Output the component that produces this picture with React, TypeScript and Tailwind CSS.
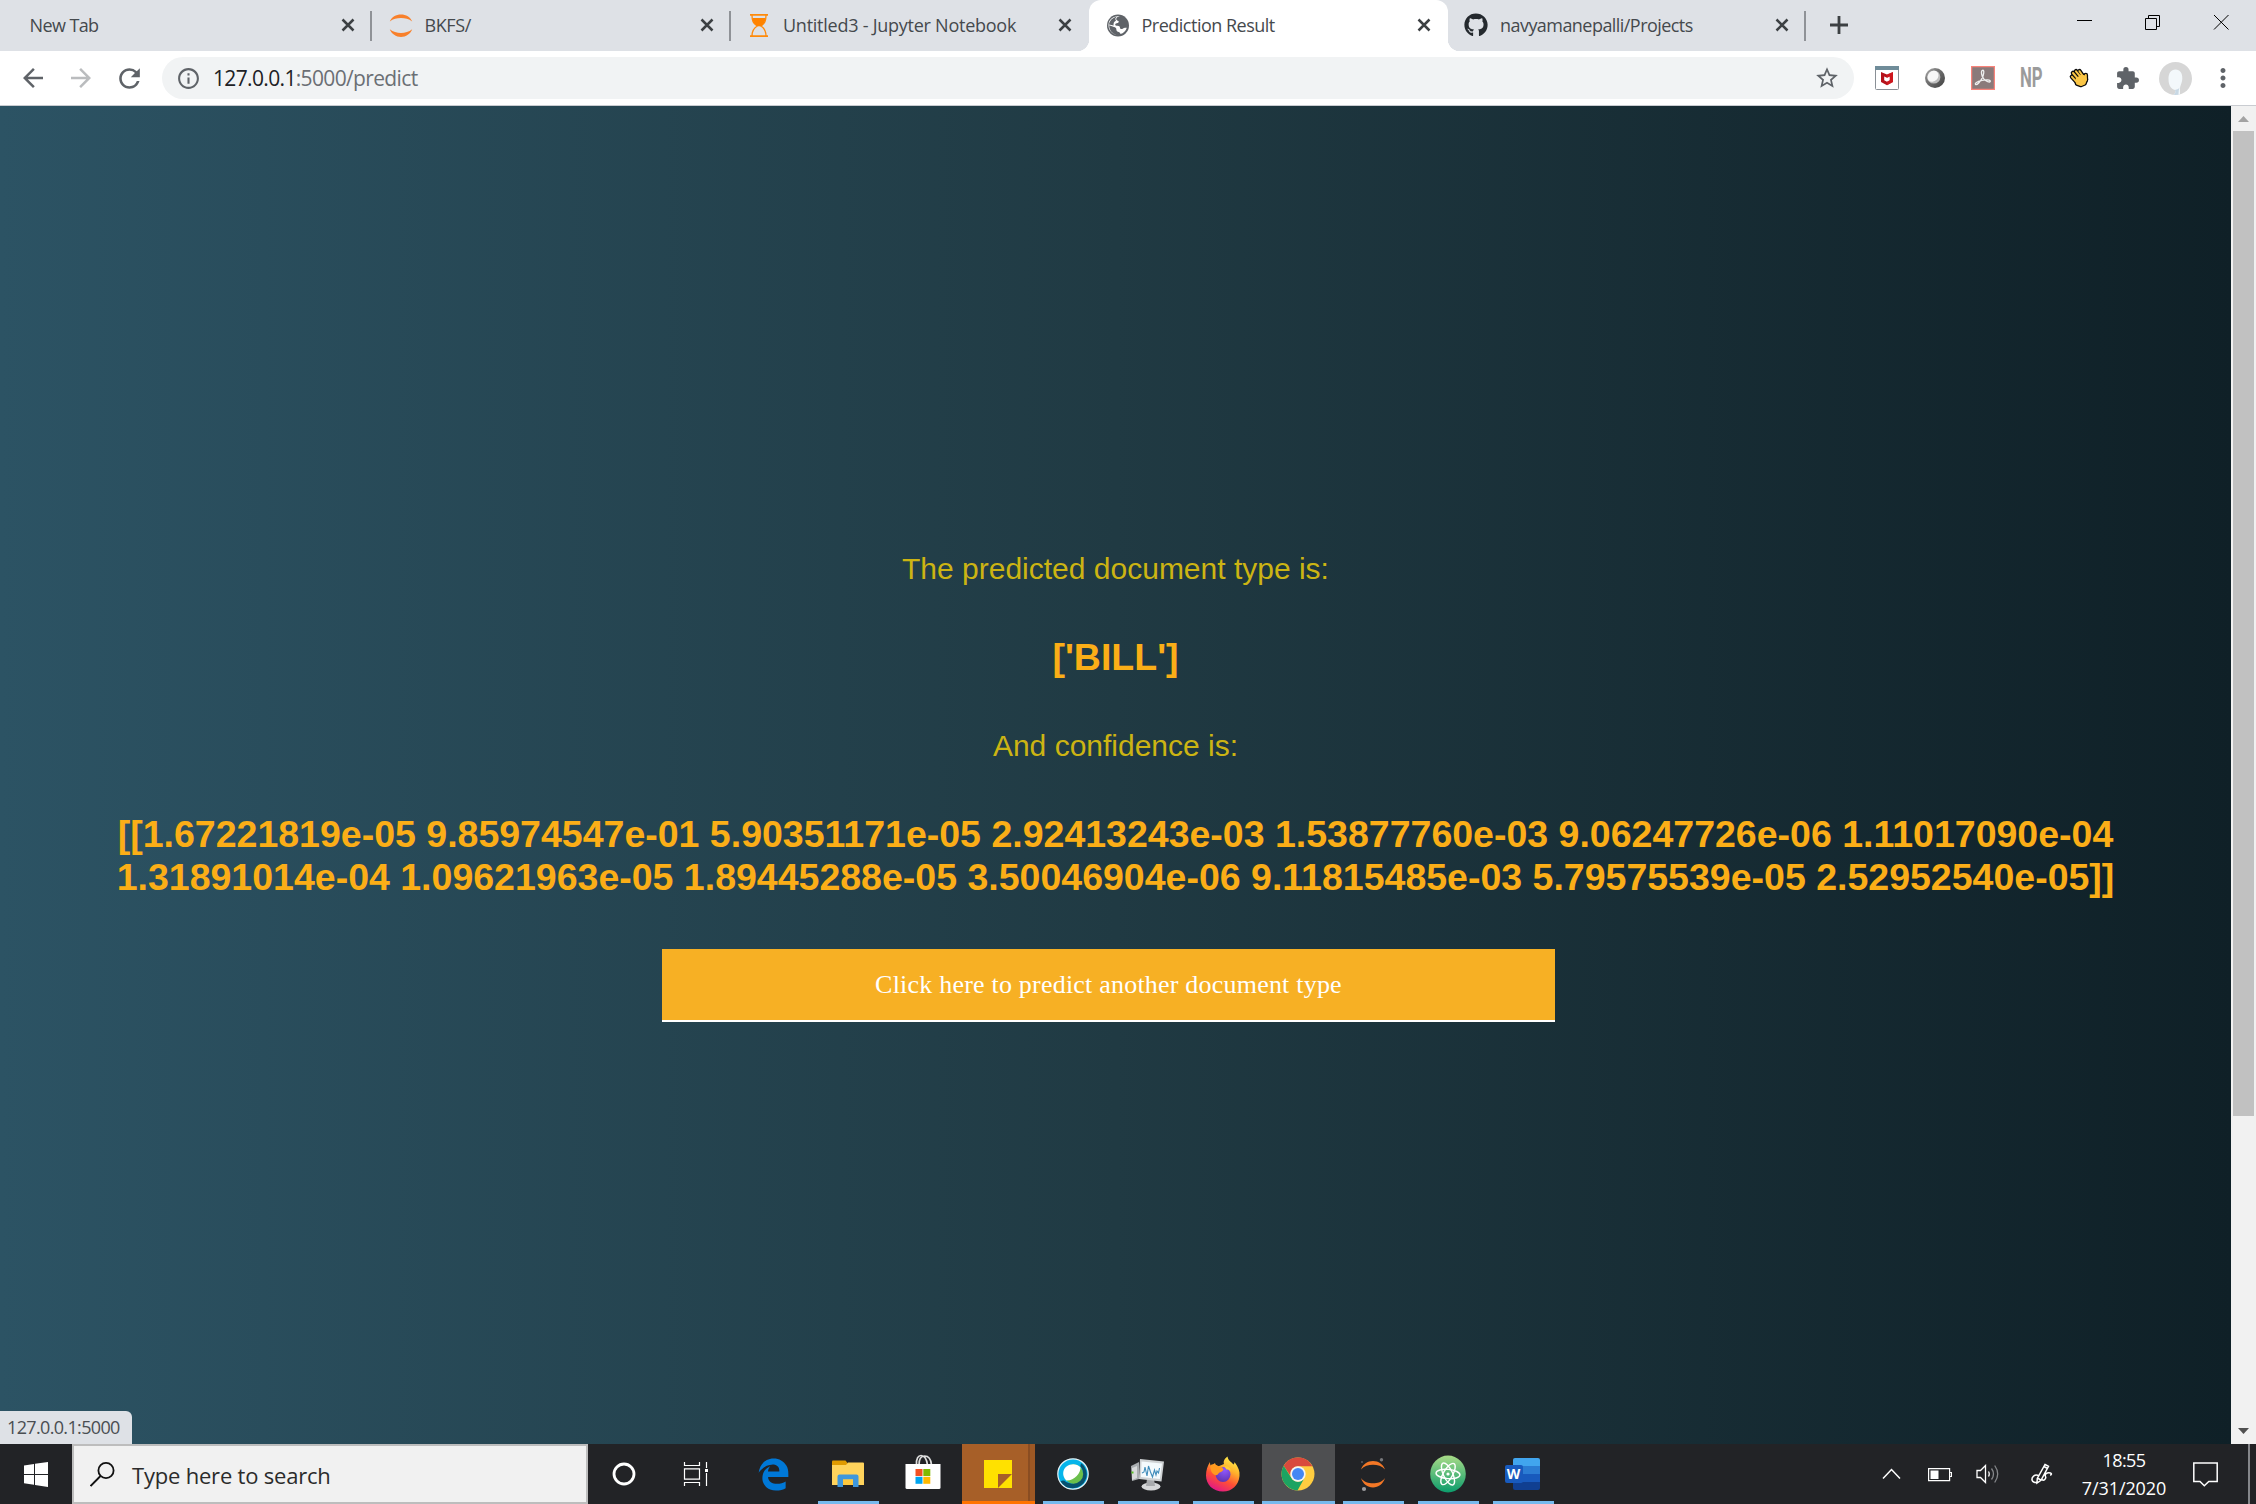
import React from "react";
import { FaGithub, FaEdgeLegacy } from "react-icons/fa";
import { MdArrowBack, MdArrowForward, MdRefresh, MdInfoOutline, MdStarBorder, MdExtension, MdMoreVert } from "react-icons/md";

type Kids = { children?: React.ReactNode };

const ui = "font-['Open_Sans','Noto_Sans',sans-serif]";

/* ---------- tab strip ---------- */

const JupyterFavicon = () => (
  <svg width="24" height="24" viewBox="0 0 24 24" fill="#f8802b">
    <path d="M.8 8.4C2.6 4 7 1.400 12 1.400S21.400 4 23.200 8.400C20 5.800 16 4.900 12 4.900S4 5.800.8 8.400z" />
    <path d="M.8 16.300C2.600 21 7 24 12 24s9.400-3 11.200-7.700C20 19 16 19.900 12 19.900S4 19 .8 16.300z" />
  </svg>
);

const HourglassFavicon = () => (
  <svg width="24" height="24" viewBox="0 0 24 24">
    <g fill="none" stroke="#ff8a0a" strokeWidth="1.3">
      <path d="M3 1.800h18M3 23.200h18" strokeWidth="1.800" />
      <path d="M5 2c0 6 1 8.500 5.200 11C6 15.500 5 18 5 23M19 2c0 6-1 8.500-5.200 11C18 15.500 19 18 19 23" />
    </g>
    <path d="M5.500 5h13c-.3 4.600-2 6.500-5 8.300h-3C7.500 11.500 5.800 9.600 5.500 5z" fill="#ff8300" />
  </svg>
);

const GlobeFavicon = () => (
  <svg width="24" height="24" viewBox="0 0 24 24">
    <circle cx="12" cy="12.500" r="11" fill="#5f6368" />
    <path d="M14 3.600c-2.500 0-3.800 1.200-3.800 2.700 0 1 1.300 1.200 2.200 1.800.8.600.2 1.700-.8 2-1.300.4-2.400.6-2.400 1.700 0 .9 1 1 2.300 1 1.700 0 2.500.8 2.500 2 0 1 .8 1.300 2 1.200 1.200-.1 1.600-1.100 2.800-1.200l2-.1c-.9 3.200-3.400 5.500-6.300 6.300-.3-1.500-1.300-2-2.600-2.300-1.500-.3-1.500-1.600-1.600-2.600-.1-1.300-1-1.800-2.300-2.200l-4.800-1.600c-.1 4.800 3 8.500 7.300 9.600-1.500-.2-8.400-3.300-8-10C2.800 6 8 2.200 14 3.600z" fill="#fff" />
    <path d="M3 11.500C3.500 7.500 7 4.500 10.800 3.800 9 5 9 6.500 10 7.500c-.7.800-1.700 1.300-2.200 2.200-.4.900-.3 1.900-.2 2.900z" fill="#5f6368" />
  </svg>
);

const TabClose = () => (
  <svg width="14" height="14" viewBox="0 0 14 14" className="shrink-0">
    <path d="M1.500 1.500l11 11M12.500 1.500l-11 11" stroke="#3c4043" strokeWidth="2.500" />
  </svg>
);

function Tab({ icon, title, track, active, sep }: { icon?: React.ReactNode; title: string; track: string; active?: boolean; sep?: boolean }) {
  return (
    <div className={`relative flex h-[51px] w-[358.5px] shrink-0 items-center pr-[17px] pb-px ${icon ? "pl-[17.5px]" : "pl-4"} ${active ? "rounded-t-[12px] bg-white" : ""}`}>
      {active && (
        <>
          <span className="absolute bottom-0 -left-3 size-3 bg-[radial-gradient(circle_at_0_0,transparent_12px,#fff_12.5px)]" />
          <span className="absolute -right-3 bottom-0 size-3 bg-[radial-gradient(circle_at_100%_0,transparent_12px,#fff_12.5px)]" />
        </>
      )}
      {icon && <span className="mr-3 -ml-px flex size-6 items-center justify-center">{icon}</span>}
      <span className={`grow pb-px text-[18px] leading-6 whitespace-nowrap text-[#45494d] ${track}`}>{title}</span>
      <TabClose />
      {sep && <span className="absolute top-[11px] right-0 h-[30px] w-[2px] bg-[#8f9297]" />}
    </div>
  );
}

const TabStrip = () => (
  <div className="flex h-[51px] bg-[#dee1e6] pl-[13.5px]">
    <Tab title="New Tab" track="tracking-[-0.6px]" sep />
    <Tab icon={<JupyterFavicon />} title="BKFS/" track="tracking-[-0.4px]" sep />
    <Tab icon={<HourglassFavicon />} title="Untitled3 - Jupyter Notebook" track="tracking-[-0.25px]" />
    <Tab icon={<GlobeFavicon />} title="Prediction Result" track="tracking-[-0.5px]" active />
    <Tab icon={<FaGithub size={24} color="#24292e" />} title="navyamanepalli/Projects" track="tracking-[-0.55px]" sep />
    <div className="flex w-[66px] items-center justify-center pb-px">
      <svg width="18" height="18" viewBox="0 0 18 18">
        <path d="M9 0v18M0 9h18" stroke="#3c4043" strokeWidth="2.800" />
      </svg>
    </div>
    <div className="ml-auto flex h-[43px] items-center pr-[27px]">
      <svg width="152" height="16" viewBox="0 0 152 16" fill="none" stroke="#000">
        <path d="M0 6.500h15" />
        <path d="M68.500 4.500h11v11h-11zM71.500 4.500v-3h11v11h-3" />
        <path d="M137 1l14.500 14.500M151.500 1L137 15.500" />
      </svg>
    </div>
  </div>
);

/* ---------- toolbar ---------- */

const Slot = ({ children }: Kids) => <div className="flex h-full w-12 shrink-0 items-center justify-center">{children}</div>;

const McAfeeIcon = () => (
  <svg width="24" height="24" viewBox="0 0 24 24">
    <rect x=".5" y=".5" width="23" height="23" rx="1" fill="#fff" stroke="#8a9096" />
    <path d="M0 0h24v4H0z" fill="#6f8c99" />
    <path d="M6 6l6 2.600L18 6v10l-6 3.200L6 16z" fill="#b5121b" />
    <path d="M9.200 10.500l2.800 1.200 2.800-1.200v3.800L12 15.700l-2.800-1.400z" fill="#fff" />
    <path d="M12 8.600L18 6v10l-6 3.200v-3.500l2.800-1.400v-3.800L12 11.700z" fill="#e01a22" opacity=".6" />
  </svg>
);

const OrbIcon = () => (
  <svg width="22" height="22" viewBox="0 0 22 22">
    <defs>
      <linearGradient id="orb" x1="0" y1="0" x2="1" y2="1">
        <stop offset="0" stopColor="#b5b5b5" />
        <stop offset=".35" stopColor="#777" />
        <stop offset="1" stopColor="#3f3f3f" />
      </linearGradient>
    </defs>
    <circle cx="11" cy="11" r="10" fill="url(#orb)" />
    <circle cx="9.800" cy="10" r="6.600" fill="#bdbdbd" />
    <ellipse cx="9" cy="9.200" rx="6" ry="5" transform="rotate(-45 9 9.200)" fill="#f7f7f7" />
  </svg>
);

const AcrobatIcon = () => (
  <svg width="24" height="24" viewBox="0 0 24 24">
    <rect x=".6" y=".6" width="22.800" height="22.800" fill="#8a7a7a" stroke="#f9837a" strokeWidth="1.300" />
    <path d="M11.500 4.300c2.200-.6 1.300 4.700-.5 8C9.300 15.600 6 19.500 4.600 18.500c-1.300-1.200 2.400-3.500 6.400-4.200 4.300-.8 8.500-.6 8.300 1-.3 1.700-4.300.2-6.700-2.600-2-2.500-3-7.800-1.100-8.400z" fill="none" stroke="#eee" strokeWidth="1.300" />
  </svg>
);

const WaveIcon = () => (
  <svg width="22" height="22" viewBox="0 0 22 22" strokeLinecap="round" strokeLinejoin="round" fill="none">
    <g stroke="#0c0c0c" strokeWidth="4.600">
      <path d="M5 6l6 7M8 4.300l5 6M11.500 4.200l4 6M4 9.800l5 5.500M17.800 8v5" />
      <path d="M8.500 12l5-3.500 3.500 1 1 3-1.500 4-3.500 1.500-4-1.500z" fill="#0c0c0c" />
    </g>
    <path d="M8.500 12l5-3.500 3.500 1 1 3-1.500 4-3.500 1.500-4-1.500z" fill="#fbc646" stroke="#fbc646" strokeWidth="2" />
    <path d="M5 6l6 7M8 4.300l5 6M11.500 4.200l4 6M4 9.800l5 5.500M17.800 8v5" stroke="#fbc646" strokeWidth="2" />
  </svg>
);

const AvatarIcon = () => (
  <svg width="33" height="33" viewBox="0 0 33 33">
    <defs>
      <clipPath id="face"><circle cx="16.500" cy="16.500" r="16.500" /></clipPath>
    </defs>
    <g clipPath="url(#face)">
      <path d="M0 0h33v33H0z" fill="#d6d6d6" />
      <path d="M9.500 17c0-6 2.500-9.500 7-9.500s7 3.500 6.800 9c-.2 5-2.300 7-2.300 10.500V33h-6.500c2-1.500 2-3.500 1.500-5-4-.8-6.500-5-6.500-11z" fill="#f3f8fb" />
      <path d="M21 24c-.5 3-3 3.500-5 4 .8 2 .2 4-1.500 5h5c0-3 .3-6 1.500-9z" fill="#c8d8e4" />
    </g>
  </svg>
);

const Toolbar = () => (
  <div className="flex h-[55px] items-center border-b border-[#c9ccd1] bg-white pl-[9px]">
    <Slot><MdArrowBack size={30} color="#5f6368" /></Slot>
    <Slot><MdArrowForward size={30} color="#babcbe" /></Slot>
    <Slot><MdRefresh size={31} color="#5f6368" /></Slot>
    <div className="ml-[9px] flex h-[42px] w-[1692px] items-center rounded-full bg-[#f1f3f4] pr-[14px] pl-[14px]">
      <MdInfoOutline size={25} color="#5f6368" />
      <span className="ml-3 grow text-[21px] leading-7 tracking-[-0.65px] text-[#202124]">
        127.0.0.1<span className="text-[#6b6f74]">:5000/predict</span>
      </span>
      <MdStarBorder size={26} color="#5f6368" />
    </div>
    <div className="ml-[9px] flex h-full items-center">
      <Slot><McAfeeIcon /></Slot>
      <Slot><OrbIcon /></Slot>
      <Slot><AcrobatIcon /></Slot>
      <Slot><span className="inline-block scale-x-[0.62] font-['Roboto',sans-serif] text-[27px] leading-7 font-bold text-[#9b9b9b]">NP</span></Slot>
      <Slot><WaveIcon /></Slot>
      <Slot><MdExtension size={25} color="#5f6368" /></Slot>
      <Slot><AvatarIcon /></Slot>
      <Slot><MdMoreVert size={30} color="#5f6368" /></Slot>
    </div>
  </div>
);

/* ---------- page ---------- */

const Page = () => (
  <div className="flex h-[1338px]">
    <div className="relative w-[2231px] bg-linear-to-l from-[#0f2027] via-[#203a43] to-[#2c5364] pt-[446px] text-center font-['Liberation_Sans',Arial,sans-serif]">
      <div className="flex flex-col items-center gap-[50px]">
        <p className="h-[34px] text-[30px] leading-[34px] text-[#ccb413]">The predicted document type is:</p>
        <h1 className="h-[43px] text-[37.5px] leading-[43px] font-bold text-[#fbae17]">['BILL']</h1>
        <p className="h-[34px] text-[30px] leading-[34px] text-[#ccb413]">And confidence is:</p>
        <h1 className="h-[86px] text-[37.5px] leading-[43px] font-bold whitespace-nowrap text-[#fbae17]">
          [[1.67221819e-05 9.85974547e-01 5.90351171e-05 2.92413243e-03 1.53877760e-03 9.06247726e-06 1.11017090e-04
          <br />
          1.31891014e-04 1.09621963e-05 1.89445288e-05 3.50046904e-06 9.11815485e-03 5.79575539e-05 2.52952540e-05]]
        </h1>
        <button className="mr-[14px] h-[73px] w-[893px] border-b-2 border-white bg-[#f7b024] font-['Liberation_Serif',serif] text-[26px] leading-[30px] tracking-[0.21px] text-white">
          Click here to predict another document type
        </button>
      </div>
      <div className={`absolute bottom-0 left-0 flex h-[33px] w-[132px] items-center rounded-tr-[6px] bg-[#dee1e6] pl-[7px] text-[18px] tracking-[-0.65px] text-[#4a4e52] ${ui}`}>
        127.0.0.1:5000
      </div>
    </div>
    <div className="flex w-[25px] flex-col items-center bg-[#f1f1f1]">
      <svg width="25" height="25" viewBox="0 0 25 25"><path d="M7 16l5.500-6 5.500 6z" fill="#a3a3a3" /></svg>
      <div className="h-[985px] w-[21px] bg-[#c1c1c1]" />
      <svg width="25" height="25" viewBox="0 0 25 25" className="mt-auto"><path d="M7 9l5.500 6L18 9z" fill="#505050" /></svg>
    </div>
  </div>
);

/* ---------- taskbar ---------- */

const TaskItem = ({ children, running, wide, className = "" }: Kids & { running?: boolean; wide?: boolean; className?: string }) => (
  <div className="flex h-full w-[75px] shrink-0 justify-center">
    <div className={`relative flex h-full items-center justify-center ${wide ? "w-[73px]" : "w-[61px]"} ${className}`}>
      {children}
      {running && <span className="absolute inset-x-0 bottom-0 h-[3px] bg-[#76b9ed]" />}
    </div>
  </div>
);

const Explorer = () => (
  <svg width="32" height="28" viewBox="0 0 32 28">
    <path d="M0 1.500Q0 .5 1 .5h12.500L15.500 3v3H0z" fill="#e09a00" />
    <path d="M0 5h14l2-2.500h15q1 0 1 1V25H0z" fill="#ffd35c" />
    <path d="M5.500 27V16.500q0-2 2-2H24.500q2 0 2 2V27H21v-7.500H11V27z" fill="#3f97dc" />
    <path d="M11 19.500h10V25H11z" fill="#ffc83d" />
  </svg>
);

const Store = () => (
  <svg width="36" height="36" viewBox="0 0 36 36">
    <path d="M11.500 11C11 4 13.500 1.500 16 1.500S21.500 4 22.500 11M14 11c0-6 2-9 5.500-9S26 5 26.500 11" fill="none" stroke="#ddd" strokeWidth="1.700" />
    <path d="M.5 10h35v23.500q0 1.500-1.500 1.500H2Q.5 35 .5 33.500z" fill="#fff" />
    <path d="M10.500 15h7v7h-7z" fill="#f25022" /><path d="M18.300 15h7v7h-7z" fill="#7fba00" />
    <path d="M10.500 22.800h7v7h-7z" fill="#00a4ef" /><path d="M18.300 22.800h7v7h-7z" fill="#ffb900" />
  </svg>
);

const Webex = () => (
  <svg width="32" height="32" viewBox="0 0 32 32">
    <circle cx="16" cy="16" r="15.200" fill="#06b4ea" stroke="#e8f4f8" strokeWidth="1.200" />
    <path d="M24.500 5.300A14 14 0 0 1 16 30.200 14 14 0 0 1 3.500 23.200Q7 21.500 9 24q7 3.500 13-1.500 5-5 3-12-3-2.500-.5-5.200z" fill="#07506e" />
    <circle cx="16.500" cy="16" r="9.700" fill="#6bbf4b" />
    <path d="M23.500 9.200C23.800 15 17.500 22.800 9.300 22.500 4.800 18 5.500 11.500 9.500 8.500 13.800 5 20 5.500 23.500 9.200z" fill="#fff" />
  </svg>
);

const Monitor = () => (
  <svg width="36" height="34" viewBox="0 0 36 34">
    <path d="M1 9l8-4v17l-7 2z" fill="#a9adb0" /><path d="M2 11l5-2v12l-5 2z" fill="#d8dadb" />
    <path d="M1.500 14.500h2v2h-2z" fill="#58c322" />
    <ellipse cx="21" cy="29.500" rx="9.500" ry="4" fill="#d5d6d8" /><path d="M17 22h7l1 7h-9z" fill="#a8aaad" />
    <path d="M10 2l24 2.500-2.500 20L9 22z" fill="#cfd2d4" />
    <path d="M11.500 4.500l20.500 2-2.200 15.500L11 20z" fill="#f4fafd" />
    <path d="M12 16l2-1 1-5 2 9 1.500-10 2 6 2 5 2-7 1.500 5 1-4 1.500 2 1-5" fill="none" stroke="#3f8cbb" strokeWidth="1.100" />
  </svg>
);

const Firefox = () => (
  <svg width="36" height="36" viewBox="0 0 36 36">
    <defs>
      <linearGradient id="fx" x1=".8" y1="0" x2=".3" y2="1">
        <stop offset="0" stopColor="#fff44f" /><stop offset=".35" stopColor="#ffb12b" /><stop offset=".65" stopColor="#ff5034" /><stop offset="1" stopColor="#e0158b" />
      </linearGradient>
      <radialGradient id="fxo" cx=".6" cy=".2" r=".9"><stop offset="0" stopColor="#9059ff" /><stop offset="1" stopColor="#5b2fa8" /></radialGradient>
    </defs>
    <path d="M5 6c0 2 .3 3 1 4l4-3c.3 2 1.500 3 3 3.500L19 8c-1-3 1-6 3.500-7.500.5 4 3.500 5 6 8 .8-.7 1-1.500 1-2.500 4 5 5.500 9.500 5 14C33.500 29.500 27 35.500 18 35.500 8 35.500 1 28.500 1 19.500 1 14 2.500 10 5 6z" fill="url(#fx)" />
    <circle cx="18" cy="18.500" r="7.500" fill="url(#fxo)" />
    <path d="M5.500 9c4-2 7 1 9 1.500 2 0 3 1 4 3-1 2.500-4 2.500-5 4-1 2-3 2-4.500 1C6.500 17 5 13 5.500 9z" fill="#ff9a1f" />
    <path d="M19.500 10.500c3-1 5.500 1.500 6.500 4-2-1.200-3.500-.5-4.500-1z" fill="#ffd035" />
  </svg>
);

const Chrome = () => (
  <svg width="34" height="34" viewBox="0 0 34 34">
    <circle cx="17" cy="17" r="16.500" fill="#ffcd40" />
    <path d="M2.710 8.750A16.500 16.500 0 0 1 31.500 9.300H17a7.700 7.700 0 0 0-7.500 9.500z" fill="#d94a3d" />
    <path d="M2.710 8.750A16.500 16.500 0 0 0 16.500 33.500l6.800-12.200a7.700 7.700 0 0 1-13.200-.8z" fill="#1da362" />
    <circle cx="17" cy="17" r="7.700" fill="#f4f4f4" /><circle cx="17" cy="17" r="6" fill="#4587f3" />
  </svg>
);

const Jupyter = () => (
  <svg width="28" height="36" viewBox="0 0 28 36">
    <path d="M2 13.500C4 8 8.500 5 14 5s10 3 12 8.500C23 10 18.500 8.700 14 8.700S5 10 2 13.500zM2 22c2 6 6.500 9.500 12 9.500S24 28 26 22c-3 4-7.500 5.300-12 5.300S5 26 2 22z" fill="#f37726" />
    <circle cx="22.500" cy="3.800" r="1.700" fill="#77787b" /><circle cx="5" cy="33" r="2.100" fill="#9c9c9f" /><circle cx="3" cy="6" r="1" fill="#5c5d60" />
  </svg>
);

const Atom = () => (
  <svg width="36" height="38" viewBox="0 0 36 38">
    <defs><linearGradient id="at" x1="0" y1="0" x2="0" y2="1"><stop offset="0" stopColor="#a8db87" /><stop offset="1" stopColor="#0c9c6c" /></linearGradient></defs>
    <ellipse cx="18" cy="19" rx="17.800" ry="18.400" fill="url(#at)" />
    <g fill="none" stroke="#fff" strokeWidth="1.400">
      <ellipse cx="18" cy="19" rx="12" ry="4.600" transform="rotate(5 18 19)" />
      <ellipse cx="18" cy="19" rx="12" ry="4.600" transform="rotate(65 18 19)" />
      <ellipse cx="18" cy="19" rx="12" ry="4.600" transform="rotate(120 18 19)" />
    </g>
    <circle cx="18" cy="19" r="1.600" fill="#fff" />
  </svg>
);

const Word = () => (
  <div className="relative mr-0.5 h-8 w-[35px]">
    <div className="ml-2 flex h-8 w-[27px] flex-col overflow-hidden rounded-[2px]">
      <span className="grow bg-[#41a5ee]" /><span className="grow bg-[#2b7cd3]" /><span className="grow bg-[#185abd]" /><span className="grow bg-[#103f91]" />
    </div>
    <span className="absolute top-[7px] left-0 flex h-[18px] w-[18px] items-center justify-center rounded-[2px] bg-[#185abd] text-[14px] leading-none font-bold text-white">W</span>
  </div>
);

const Taskbar = () => (
  <div className="flex h-[60px] items-center bg-[#222326] text-white">
    <div className="flex h-full w-[72px] items-center justify-center">
      <svg width="24" height="25" viewBox="0 0 24 25" fill="#fff">
        <path d="M0 3.500L10 2v10H0zM11 1.800L24 0v12H11zM0 13h10v9.700L0 21.300zM11 13h13v12l-13-2z" />
      </svg>
    </div>
    <div className="flex h-full w-[516px] items-center border-2 border-[#bdbdbd] bg-[#f1f1f1] pl-4">
      <svg width="25" height="25" viewBox="0 0 25 25" fill="none" stroke="#111" strokeWidth="1.800">
        <circle cx="16" cy="8.500" r="7.600" /><path d="M10.500 14L.6 24" />
      </svg>
      <span className="ml-[17px] pt-0.5 text-[22px] leading-8 tracking-[-0.2px] text-[#2b2b2b]">Type here to search</span>
    </div>
    <div className="flex w-[72px] justify-center">
      <svg width="24" height="24" viewBox="0 0 24 24"><circle cx="12" cy="12" r="10" fill="none" stroke="#fff" strokeWidth="2.800" /></svg>
    </div>
    <div className="flex w-[75.5px] items-center pl-[23px]">
      <svg width="26" height="24" viewBox="0 0 26 24" fill="none" stroke="#fff" strokeWidth="1.200">
        <path d="M1.500 0v3.500h15V0M1.500 24v-3.500h15V24M1.500 6.800h15v10.400h-15zM23.500 0v6M23.500 11v13" /><path d="M22 7h3v3h-3z" fill="#fff" stroke="none" />
      </svg>
    </div>
    <TaskItem><FaEdgeLegacy size={33} color="#0078d7" /></TaskItem>
    <TaskItem running><Explorer /></TaskItem>
    <TaskItem><span className="-mt-1"><Store /></span></TaskItem>
    <TaskItem wide className="bg-[#a75f28]">
      <svg width="28" height="28" viewBox="0 0 28 28"><path d="M0 0h28v14H14v14H0z" fill="#ffe100" /><path d="M28 14v14H14z" fill="#ffe100" /></svg>
      <span className="absolute inset-y-0 right-0 w-[7px] border-l-2 border-[#8a4d22] bg-[#9e5824]" />
      <span className="absolute inset-x-0 bottom-0 h-[3px] bg-[#ff7300]" />
    </TaskItem>
    <TaskItem running><Webex /></TaskItem>
    <TaskItem running><Monitor /></TaskItem>
    <TaskItem running><Firefox /></TaskItem>
    <TaskItem running wide className="bg-[#4e4f51]"><Chrome /></TaskItem>
    <TaskItem running><Jupyter /></TaskItem>
    <TaskItem running><Atom /></TaskItem>
    <TaskItem running><Word /></TaskItem>
    <div className="ml-auto flex h-full items-center">
      <svg width="19" height="12" viewBox="0 0 19 12" fill="none" stroke="#fff" strokeWidth="1.500"><path d="M1 10.500l8.500-9 8.500 9" /></svg>
      <svg width="24" height="14" viewBox="0 0 24 14" className="mt-px ml-[27px]"><path d="M.6.6h21v12H.6zM22 4.500h1.500v4H22" fill="none" stroke="#fff" strokeWidth="1.200" /><path d="M2.500 2.500h8v8.500h-8z" fill="#fff" /></svg>
      <svg width="24" height="20" viewBox="0 0 24 20" className="ml-6" fill="none" stroke="#fff" strokeWidth="1.300">
        <path d="M1 6.500h3.500L9.500 1.500v17l-5-5H1zM12.500 7.500q1.500 2.500 0 5" /><path d="M15.500 4.500q4 5.500 0 11M18.700 1.500q6 8.500 0 17" stroke="#85878a" />
      </svg>
      <svg width="22" height="22" viewBox="0 0 22 22" className="ml-[31px]" fill="none" stroke="#fff" strokeWidth="1.500">
        <path d="M14 1.500l3.500 1.800-7.500 14-4 2.700.3-4.500zM13 3.500l3.500 2M6.500 15l3.500 2.200M7.500 12.500C3.500 11 .5 14 1 17c.5 2.500 3.500 3 5.500 2M10.500 16c2 3 5-.5 4-2.500s1-4.500 5-3.500c1.500.5 1 2-.5 2" />
      </svg>
      <div className="ml-[26px] w-[90px] text-center text-[18px] leading-[28px] whitespace-nowrap">
        <div className="tracking-[-0.6px]">18:55</div>
        <div className="tracking-[-0.1px]">7/31/2020</div>
      </div>
      <svg width="25" height="25" viewBox="0 0 25 25" className="ml-[24px]" fill="none" stroke="#fff" strokeWidth="1.500"><path d="M.8 1h23.400v18.500h-8.400L11.300 23.700 7 19.500H.8z" /></svg>
      <div className="ml-[30px] h-full w-2 border-l-2 border-[#85868a]" />
    </div>
  </div>
);

export default function App() {
  return (
    <div className={`flex h-[1504px] w-[2256px] flex-col overflow-hidden bg-white ${ui}`}>
      <TabStrip />
      <Toolbar />
      <Page />
      <Taskbar />
    </div>
  );
}
